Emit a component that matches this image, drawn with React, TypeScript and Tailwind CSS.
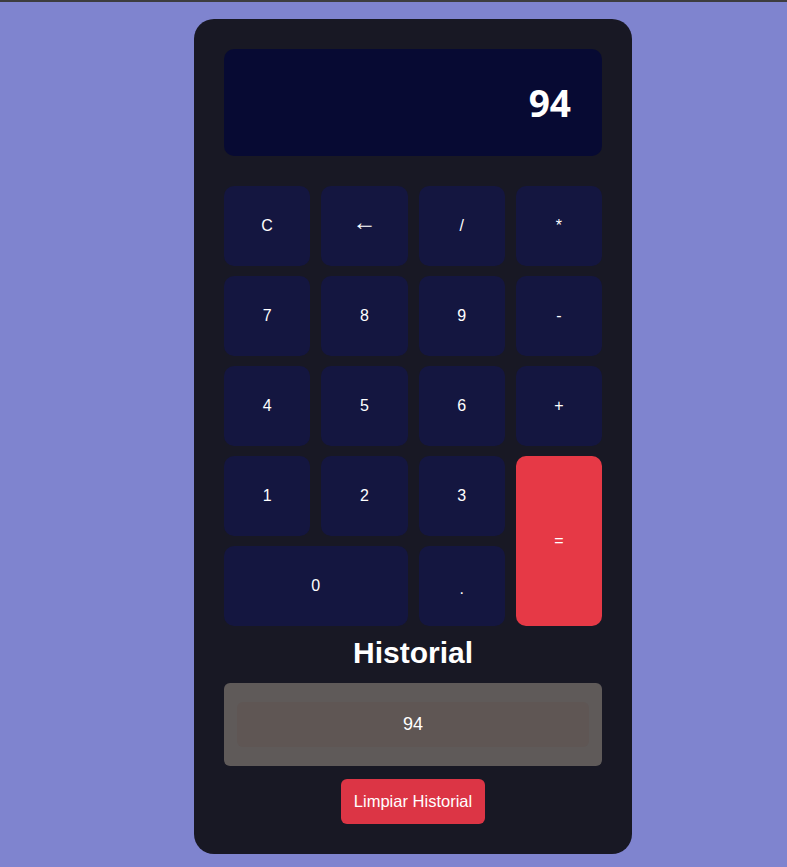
import React from "react";

const btn =
  "flex items-center justify-center rounded-[10px] bg-[#141640] text-white text-[16px]";

export default function App() {
  const keys: { label: React.ReactNode; id: string }[] = [
    { id: "C", label: "C" },
    {
      id: "back",
      label: (
        <span className="text-[24px] leading-none -translate-y-[4px] inline-block">
          ←
        </span>
      ),
    },
    { id: "/", label: "/" },
    { id: "*", label: "*" },
    { id: "7", label: "7" },
    { id: "8", label: "8" },
    { id: "9", label: "9" },
    { id: "-", label: "-" },
    { id: "4", label: "4" },
    { id: "5", label: "5" },
    { id: "6", label: "6" },
    { id: "+", label: "+" },
    { id: "1", label: "1" },
    { id: "2", label: "2" },
    { id: "3", label: "3" },
  ];
  return (
    <div
      className="min-h-[867px] bg-[#7f84cf] flex flex-col"
      style={{ fontFamily: '"Liberation Sans", Arial, sans-serif' }}
    >
      <div className="h-[2px] w-full bg-[#3d3d3f]" />
      <div className="mt-[17px] ml-[194px] w-[438px] h-[835px] rounded-[20px] bg-[#181824] p-[30px] flex flex-col">
        <div className="h-[107px] rounded-[10px] bg-[#070a33] flex items-center justify-end pr-[31px]">
          <span
            className="text-white font-bold text-[37px] leading-none"
            style={{ fontFamily: '"Open Sans", "Noto Sans", sans-serif' }}
          >
            94
          </span>
        </div>
        <div className="mt-[30px] grid grid-cols-4 gap-x-[11px] gap-y-[10px] auto-rows-[80px]">
          {keys.map((k) => (
            <button key={k.id} className={btn}>
              {k.label}
            </button>
          ))}
          <button className="row-span-2 col-start-4 row-start-4 flex items-center justify-center rounded-[10px] bg-[#e63946] text-white text-[16px]">
            =
          </button>
          <button className={`${btn} col-span-2`}>0</button>
          <button className={`${btn} pt-[6px]`}>.</button>
        </div>
        <h2 className="mt-[10px] text-center text-white font-bold text-[30px] leading-[34px]">
          Historial
        </h2>
        <div className="mt-[13px] rounded-[6px] bg-[#5f5a59] px-[13px] py-[19px]">
          <div className="h-[45px] rounded-[6px] bg-[#5f5654] flex items-center justify-center text-white text-[18px]">
            94
          </div>
        </div>
        <div className="mt-[13px] flex justify-center">
          <button className="w-[144px] h-[45px] rounded-[6px] bg-[#dc3545] text-white text-[16.5px]">
            Limpiar Historial
          </button>
        </div>
      </div>
    </div>
  );
}
